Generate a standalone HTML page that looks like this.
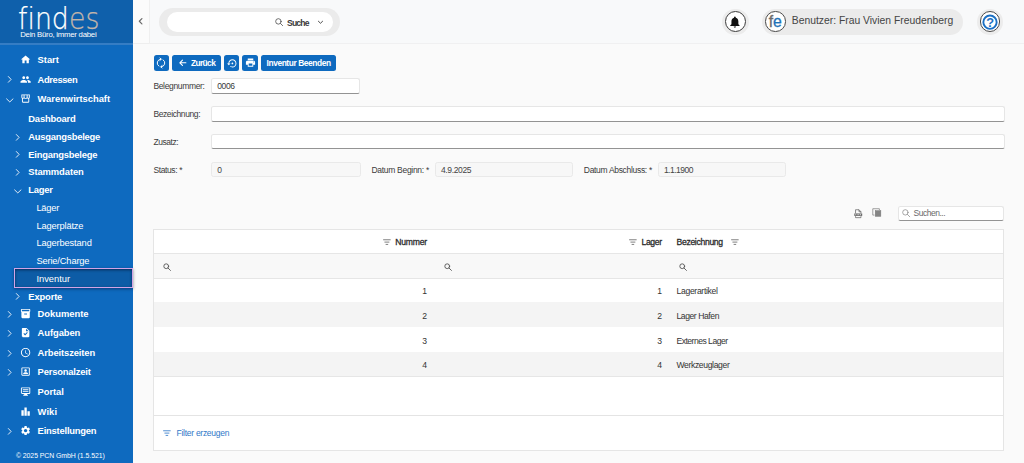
<!DOCTYPE html>
<html lang="de">
<head>
<meta charset="utf-8">
<title>findes – Inventur</title>
<style>
*{box-sizing:border-box;margin:0;padding:0}
html,body{width:1024px;height:463px;overflow:hidden;background:#fafafa;font-family:"Liberation Sans",sans-serif;color:#333}
body{position:relative}
.ic{position:absolute;display:block;overflow:visible}
/* sidebar */
#side{position:absolute;left:0;top:0;width:133px;height:463px;background:#0e6abf;color:#fff}
#logo{position:absolute;left:0;top:0;width:133px;height:45px;background:#0f60ab;border-bottom:2px solid #357dc4}
#logo .w{position:absolute;left:17.800px;top:-0.800px;font-family:"DejaVu Sans Light","DejaVu Sans",sans-serif;font-weight:200;font-size:30.400px;line-height:40px;color:#fff;-webkit-text-stroke:0.250px #fff;transform-origin:0 0;transform:scaleX(.882);white-space:nowrap;font-variant-ligatures:none}
#logo .w span{color:#c2b5aa;-webkit-text-stroke:0.250px #c2b5aa}
#logo .t{position:absolute;left:20.200px;top:30.200px;font-size:7.800px;letter-spacing:-0.260px;line-height:10px;color:#fff;white-space:nowrap}
.mi{position:absolute;left:0;width:133px;height:14px;line-height:14px;font-size:9.400px;letter-spacing:0;font-weight:bold;white-space:nowrap;color:#fff}
.mi.l1{padding-left:37.600px}
.mi.l2{padding-left:28.300px}
.mi.l3{padding-left:36.400px;font-weight:normal;font-size:9.300px}
#foot{position:absolute;left:15.900px;top:451.500px;font-size:6.900px;letter-spacing:-0.050px;line-height:8px;color:#fff;white-space:nowrap}
#sel{position:absolute;left:14px;top:268px;width:119px;height:20px;background:#0d5ca6;border:1px solid #d3a4e6;box-shadow:inset 0 1px 3px rgba(0,0,20,.55),0 1px 3px rgba(0,0,30,.45)}
/* topbar */
#top{position:absolute;left:133px;top:0;width:891px;height:44px;background:#f8f9fa;border-bottom:1px solid #f0f0f1}
#coll{position:absolute;left:0;top:0;width:17px;height:43.500px;background:#fbfbfb;border-right:1px solid #efefef;border-bottom:1px solid #eeeeee}
#spill{position:absolute;left:26.300px;top:8.200px;width:180.500px;height:27.500px;border-radius:14px;background:#ebebeb}
#sin{position:absolute;left:33.500px;top:11.800px;width:166.500px;height:20px;border-radius:10px;background:#fff}
.t{position:absolute;white-space:nowrap;line-height:12px}
.circ{position:absolute;border-radius:50%}
#upill{position:absolute;left:628.700px;top:8.600px;width:201.500px;height:26px;border-radius:13px;background:#ebebeb}
/* toolbar */
.btn{position:absolute;top:55px;height:15.800px;background:#0e6abf;border-radius:2.500px;color:#fff;font-weight:bold;font-size:7.600px;line-height:15.800px;white-space:nowrap}
/* form */
.lbl{position:absolute;font-size:8.500px;line-height:12px;color:#3a3a3a;white-space:nowrap}
.inp{position:absolute;height:15px;background:#fff;border:1px solid #e6e6e6;border-bottom:1px solid #939393;border-radius:2.500px;font-size:8.500px;line-height:14.400px;padding-left:5px;color:#3a3a3a;white-space:nowrap}
.inp.dis{background:#f7f7f7;border:1px solid #e9e9e9;color:#444}
/* grid */
#grid{position:absolute;left:153px;top:229px;width:850.500px;height:222px;background:#fff;border:1px solid #e5e5e5}
.row{position:absolute;left:0;width:848.500px;border-bottom:1px solid #e6e6e6}
.cell{position:absolute;font-size:8.600px;line-height:12px;color:#333;white-space:nowrap}
.hd{color:#2a2a2a;-webkit-text-stroke:0.280px #2a2a2a}
</style>
</head>
<body>
<div id="side">
  <div id="logo"><div class="w">find<span>es</span></div><div class="t">Dein Büro, immer dabei</div></div>
  <div id="sel"></div>
  <div class="mi l1" style="top:53.4px;letter-spacing:-0.032px">Start</div>
  <svg class="ic" style="left:19.7px;top:54.3px;width:11.2px;height:11.2px" viewBox="0 0 24 24" fill="#fff" ><path d="M10 20v-6h4v6h5v-8h3L12 3 2 12h3v8z"/></svg>
  <div class="mi l1" style="top:72.7px;letter-spacing:-0.379px">Adressen</div>
  <svg class="ic" style="left:19.7px;top:73.6px;width:11.2px;height:11.2px" viewBox="0 0 24 24" fill="#fff" ><path d="M16 11c1.66 0 2.99-1.34 2.99-3S17.66 5 16 5c-1.66 0-3 1.34-3 3s1.34 3 3 3zm-8 0c1.66 0 2.99-1.34 2.99-3S9.66 5 8 5C6.34 5 5 6.34 5 8s1.34 3 3 3zm0 2c-2.33 0-7 1.17-7 3.5V19h14v-2.5c0-2.33-4.67-3.5-7-3.5zm8 0c-.29 0-.62.02-.97.05 1.16.84 1.97 1.97 1.97 3.45V19h6v-2.5c0-2.33-4.67-3.5-7-3.5z"/></svg>
  <svg class="ic" style="left:6.8px;top:76.4px;width:6.8px;height:6.8px" viewBox="0 0 10 10" fill="none" stroke="#f1f5fb" stroke-width="1.35" stroke-linecap="round" stroke-linejoin="round"><path d="M2 0.800L6 5 2 9.200"/></svg>
  <div class="mi l1" style="top:91.9px;letter-spacing:-0.006px">Warenwirtschaft</div>
  <svg class="ic" style="left:19.7px;top:92.8px;width:11.2px;height:11.2px" viewBox="0 0 24 24" fill="#fff" ><path fill-rule="evenodd" d="M3 3h18v6.2c0 1.1-.5 2-1.2 2.6V19c0 1.1-.9 2-2 2H6.200c-1.100 0-2-.9-2-2v-7.200C3.500 11.200 3 10.300 3 9.200V3zm2 2v4.100c0 .8.600 1.400 1.350 1.400S7.700 9.900 7.700 9.100V5H5zm4.700 0v4.100c0 .8.600 1.400 1.300 1.400h2c.7 0 1.300-.6 1.300-1.400V5H9.700zm6.600 0v4.100c0 .8.600 1.400 1.350 1.400S19 9.900 19 9.100V5h-2.700zM6.200 12.500V19h11.600v-6.500c-.9 0-1.800-.4-2.400-1.100-.6.700-1.500 1.100-2.400 1.100h-2c-.9 0-1.800-.4-2.400-1.100-.6.700-1.500 1.100-2.400 1.100z"/></svg>
  <svg class="ic" style="left:5.6px;top:96.7px;width:7.6px;height:7.6px" viewBox="0 0 10 10" fill="none" stroke="#f1f5fb" stroke-width="1.2" stroke-linecap="round" stroke-linejoin="round"><path d="M0.800 2.500L5 6.500 9.200 2.500"/></svg>
  <div class="mi l2" style="top:111.9px;letter-spacing:-0.197px">Dashboard</div>
  <div class="mi l2" style="top:129.8px;letter-spacing:-0.238px">Ausgangsbelege</div>
  <svg class="ic" style="left:15.3px;top:133.5px;width:6.8px;height:6.8px" viewBox="0 0 10 10" fill="none" stroke="#f1f5fb" stroke-width="1.35" stroke-linecap="round" stroke-linejoin="round"><path d="M2 0.800L6 5 2 9.200"/></svg>
  <div class="mi l2" style="top:147.7px;letter-spacing:-0.215px">Eingangsbelege</div>
  <svg class="ic" style="left:15.3px;top:151.4px;width:6.8px;height:6.8px" viewBox="0 0 10 10" fill="none" stroke="#f1f5fb" stroke-width="1.35" stroke-linecap="round" stroke-linejoin="round"><path d="M2 0.800L6 5 2 9.200"/></svg>
  <div class="mi l2" style="top:164.9px;letter-spacing:-0.087px">Stammdaten</div>
  <svg class="ic" style="left:15.3px;top:168.6px;width:6.8px;height:6.8px" viewBox="0 0 10 10" fill="none" stroke="#f1f5fb" stroke-width="1.35" stroke-linecap="round" stroke-linejoin="round"><path d="M2 0.800L6 5 2 9.200"/></svg>
  <div class="mi l2" style="top:182.7px;letter-spacing:-0.246px">Lager</div>
  <svg class="ic" style="left:14.1px;top:187.5px;width:7.6px;height:7.6px" viewBox="0 0 10 10" fill="none" stroke="#f1f5fb" stroke-width="1.2" stroke-linecap="round" stroke-linejoin="round"><path d="M0.800 2.500L5 6.500 9.200 2.500"/></svg>
  <div class="mi l3" style="top:201.0px;letter-spacing:-0.236px">Läger</div>
  <div class="mi l3" style="top:218.8px;letter-spacing:-0.145px">Lagerplätze</div>
  <div class="mi l3" style="top:235.9px;letter-spacing:-0.131px">Lagerbestand</div>
  <div class="mi l3" style="top:253.7px;letter-spacing:-0.148px">Serie/Charge</div>
  <div class="mi l3" style="top:272.1px;letter-spacing:0.026px">Inventur</div>
  <div class="mi l2" style="top:289.6px;letter-spacing:-0.144px">Exporte</div>
  <svg class="ic" style="left:15.3px;top:293.3px;width:6.8px;height:6.8px" viewBox="0 0 10 10" fill="none" stroke="#f1f5fb" stroke-width="1.35" stroke-linecap="round" stroke-linejoin="round"><path d="M2 0.800L6 5 2 9.200"/></svg>
  <div class="mi l1" style="top:306.9px;letter-spacing:-0.007px">Dokumente</div>
  <svg class="ic" style="left:19.7px;top:307.8px;width:11.2px;height:11.2px" viewBox="0 0 24 24" fill="#fff" ><path d="M20 2H4c-1 0-2 .9-2 2v3.010c0 .72.430 1.340 1 1.690V20c0 1.100 1.100 2 2 2h14c.9 0 2-.9 2-2V8.700c.57-.35 1-.97 1-1.690V4c0-1.100-1-2-2-2zm-5 12H9v-2h6v2zm5-7H4V4h16v3z"/></svg>
  <svg class="ic" style="left:6.8px;top:310.6px;width:6.8px;height:6.8px" viewBox="0 0 10 10" fill="none" stroke="#f1f5fb" stroke-width="1.35" stroke-linecap="round" stroke-linejoin="round"><path d="M2 0.800L6 5 2 9.200"/></svg>
  <div class="mi l1" style="top:326.2px;letter-spacing:-0.067px">Aufgaben</div>
  <svg class="ic" style="left:19.7px;top:327.1px;width:11.2px;height:11.2px" viewBox="0 0 24 24" fill="#fff" ><path d="M14 2H6c-1.100 0-1.990.9-1.990 2L4 20c0 1.100.890 2 1.990 2H18c1.100 0 2-.9 2-2V8l-6-6zm-3.060 16L7.400 14.460l1.410-1.410 2.120 2.120 4.240-4.240 1.410 1.410L10.940 18zM13 9V3.500L18.500 9H13z"/></svg>
  <svg class="ic" style="left:6.8px;top:329.9px;width:6.8px;height:6.8px" viewBox="0 0 10 10" fill="none" stroke="#f1f5fb" stroke-width="1.35" stroke-linecap="round" stroke-linejoin="round"><path d="M2 0.800L6 5 2 9.200"/></svg>
  <div class="mi l1" style="top:345.9px;letter-spacing:-0.106px">Arbeitszeiten</div>
  <svg class="ic" style="left:19.7px;top:346.8px;width:11.2px;height:11.2px" viewBox="0 0 24 24" fill="#fff" ><path d="M11.990 2C6.470 2 2 6.480 2 12s4.470 10 9.990 10C17.520 22 22 17.520 22 12S17.520 2 11.990 2zM12 20c-4.420 0-8-3.580-8-8s3.580-8 8-8 8 3.580 8 8-3.580 8-8 8zm.5-13H11v6l5.250 3.150.750-1.230-4.500-2.670z"/></svg>
  <svg class="ic" style="left:6.8px;top:349.6px;width:6.8px;height:6.8px" viewBox="0 0 10 10" fill="none" stroke="#f1f5fb" stroke-width="1.35" stroke-linecap="round" stroke-linejoin="round"><path d="M2 0.800L6 5 2 9.200"/></svg>
  <div class="mi l1" style="top:365.4px;letter-spacing:-0.186px">Personalzeit</div>
  <svg class="ic" style="left:19.7px;top:366.3px;width:11.2px;height:11.2px" viewBox="0 0 24 24" fill="#fff" ><path fill-rule="evenodd" d="M5 3h14c1.100 0 2 .9 2 2v14c0 1.100-.9 2-2 2H5c-1.100 0-2-.9-2-2V5c0-1.100.9-2 2-2zm0 2v14h14V5H5zm7 2.200c1.500 0 2.700 1.200 2.700 2.700S13.500 12.600 12 12.600 9.300 11.400 9.300 9.900 10.500 7.200 12 7.200zM6.800 17v-.9c0-1.800 3.500-2.700 5.200-2.700s5.200.9 5.200 2.700v.9H6.800z"/></svg>
  <svg class="ic" style="left:6.8px;top:369.1px;width:6.8px;height:6.8px" viewBox="0 0 10 10" fill="none" stroke="#f1f5fb" stroke-width="1.35" stroke-linecap="round" stroke-linejoin="round"><path d="M2 0.800L6 5 2 9.200"/></svg>
  <div class="mi l1" style="top:384.9px;letter-spacing:-0.08px">Portal</div>
  <svg class="ic" style="left:19.7px;top:385.8px;width:11.2px;height:11.2px" viewBox="0 0 24 24" fill="#fff" ><path fill-rule="evenodd" d="M4 3h16c1.100 0 2 .9 2 2v10c0 1.100-.9 2-2 2h-5v2h2v2H7v-2h2v-2H4c-1.100 0-2-.9-2-2V5c0-1.100.9-2 2-2zm0 2v10h16V5H4zm2 2h12v2H6V7zm0 4h12v2H6v-2z"/></svg>
  <div class="mi l1" style="top:404.7px;letter-spacing:0.074px">Wiki</div>
  <svg class="ic" style="left:19.7px;top:405.6px;width:11.2px;height:11.2px" viewBox="0 0 24 24" fill="#fff" ><path d="M8 21H3V9h5v12zm6.500-18h-5v18h5V3zM21 11h-5v10h5V11z"/></svg>
  <div class="mi l1" style="top:424.4px;letter-spacing:-0.205px">Einstellungen</div>
  <svg class="ic" style="left:19.7px;top:425.3px;width:11.2px;height:11.2px" viewBox="0 0 24 24" fill="#fff" ><path d="M19.140 12.940c.04-.3.060-.610.060-.940 0-.320-.02-.640-.07-.940l2.030-1.580c.18-.14.230-.410.120-.610l-1.920-3.320c-.12-.22-.37-.29-.59-.22l-2.390.960c-.5-.38-1.030-.7-1.620-.940l-.36-2.540c-.04-.24-.24-.41-.48-.41h-3.840c-.24 0-.43.170-.47.410l-.36 2.540c-.59.240-1.130.570-1.620.940l-2.390-.96c-.22-.08-.47 0-.59.220L2.740 8.870c-.12.210-.08.470.12.610l2.030 1.580c-.05.3-.09.630-.09.940s.02.640.07.940l-2.030 1.580c-.18.140-.23.410-.12.610l1.920 3.320c.12.220.37.290.59.220l2.390-.96c.5.380 1.030.7 1.620.940l.36 2.540c.05.240.24.410.48.410h3.840c.24 0 .44-.17.470-.41l.36-2.540c.59-.24 1.130-.56 1.620-.94l2.390.960c.22.080.47 0 .59-.22l1.920-3.320c.12-.22.070-.47-.12-.61l-2.010-1.580zM12 15.600c-1.980 0-3.600-1.620-3.600-3.600s1.620-3.600 3.600-3.600 3.600 1.620 3.600 3.600-1.620 3.600-3.600 3.600z"/></svg>
  <svg class="ic" style="left:6.8px;top:428.1px;width:6.8px;height:6.8px" viewBox="0 0 10 10" fill="none" stroke="#f1f5fb" stroke-width="1.35" stroke-linecap="round" stroke-linejoin="round"><path d="M2 0.800L6 5 2 9.200"/></svg>
  <div id="foot">© 2025 PCN GmbH (1.5.521)</div>
</div>
<div id="top">
<div id="coll"></div>
<svg class="ic" style="left:5.2px;top:18.3px;width:6.5px;height:6.5px" viewBox="0 0 10 10" fill="none" stroke="#6a6a6a" stroke-width="1.75" stroke-linecap="round" stroke-linejoin="round"><path d="M6 0.800L2 5 6 9.200"/></svg>
<div id="spill"></div><div id="sin"></div>
<svg class="ic" style="left:142px;top:18.100px;width:8.400px;height:8.400px" viewBox="0 0 16 16" fill="none" stroke="#4a4a4a" stroke-width="1.500" stroke-linecap="round"><circle cx="6.500" cy="6.500" r="5.200"/><path d="M10.500 10.500L14.600 14.600"/></svg>
<div class="t" style="left:154px;top:16.900px;font-size:8.600px;letter-spacing:-0.819px;font-weight:bold;color:#3a3a3a">Suche</div>
<svg class="ic" style="left:185.4px;top:20.3px;width:5px;height:5px" viewBox="0 0 10 10" fill="none" stroke="#444" stroke-width="1.9" stroke-linecap="round" stroke-linejoin="round"><path d="M0.800 2.500L5 6.500 9.200 2.500"/></svg>
<div class="circ" style="left:589.200px;top:8.500px;width:26.400px;height:26.400px;background:#ececec"></div>
<div class="circ" style="left:592px;top:11.100px;width:20.900px;height:20.900px;background:#fff;border:1px solid #3c3c3c"></div>
<svg class="ic" style="left:595.400px;top:15.200px;width:13.800px;height:13.800px" viewBox="0 0 24 24" fill="#111"><path d="M12 22c1.100 0 2-.9 2-2h-4c0 1.100.9 2 2 2zm6-6v-5c0-3.070-1.630-5.640-4.500-6.320V4c0-.83-.67-1.500-1.500-1.500s-1.500.67-1.500 1.500v.680C7.640 5.360 6 7.920 6 11v5l-2 2v1h16v-1l-2-2z"/></svg>
<div id="upill"></div>
<div class="circ" style="left:632px;top:11.300px;width:20.500px;height:20.500px;background:#fff;border:1px solid #4a4a4a"></div>
<div class="t" style="left:635.800px;top:12.900px;font-size:15.800px;line-height:17px;letter-spacing:-0.300px;color:#6b6b6b;-webkit-text-stroke:0.300px #6b6b6b">f<span style="color:#1e73b8;-webkit-text-stroke:0.300px #1e73b8">e</span></div>
<div class="t" style="left:658.800px;top:14.500px;font-size:10.350px;line-height:12px;color:#444">Benutzer: Frau Vivien Freudenberg</div>
<div class="circ" style="left:843.900px;top:8.500px;width:26.400px;height:26.400px;background:#ececec"></div>
<div class="circ" style="left:846.800px;top:11.300px;width:20.500px;height:20.500px;background:#fff;border:1px solid #4a4a4a"></div>
<svg class="ic" style="left:849.100px;top:13.650px;width:16px;height:16px" viewBox="0 0 16 16" fill="none" stroke="#1b70c4" stroke-width="1.900"><circle cx="8" cy="8.200" r="6.650"/></svg>
<div class="t" style="left:853.200px;top:15.900px;font-size:12.800px;line-height:14px;font-weight:bold;color:#1b70c4">?</div>
</div>
<div class="btn" style="left:153.8px;width:15.6px"><svg class="ic" style="left:1.550px;top:2.200px;width:12px;height:12px" viewBox="0 0 20 20" fill="none" stroke="#fff" stroke-width="1.600" stroke-linecap="round" stroke-linejoin="round"><path d="M10 3.700A6.300 6.300 0 0 0 6.390 15.160M10 16.300A6.300 6.300 0 0 0 13.610 4.840"/><path d="M8.300 1.700L10.300 3.700 8.300 5.700M11.700 14.300L9.700 16.300 11.700 18.300"/></svg></div>
<div class="btn" style="left:172.2px;width:48.6px"><svg class="ic" style="left:6.700px;top:4.300px;width:7.600px;height:7.600px" viewBox="0 0 16 16" fill="none" stroke="#fff" stroke-width="2.400" stroke-linecap="round" stroke-linejoin="round"><path d="M14.500 8H2M7.300 2.500L1.800 8l5.500 5.500"/></svg><span style="position:absolute;left:18.800px;top:1.100px;font-size:8.400px;letter-spacing:-0.623px">Zurück</span></div>
<div class="btn" style="left:223.6px;width:15.7px"><svg class="ic" style="left:3px;top:2.500px;width:10.800px;height:10.800px" viewBox="0 0 24 24" fill="#fff"><path d="M14 12c0-1.100-.9-2-2-2s-2 .9-2 2 .9 2 2 2 2-.9 2-2zm-2-9c-4.970 0-9 4.030-9 9H0l4 4 4-4H5c0-3.870 3.130-7 7-7s7 3.130 7 7-3.130 7-7 7c-1.510 0-2.910-.49-4.060-1.300l-1.420 1.440C8.040 20.300 9.940 21 12 21c4.970 0 9-4.030 9-9s-4.030-9-9-9z"/></svg></div>
<div class="btn" style="left:242.1px;width:16px"><svg class="ic" style="left:2.600px;top:2.400px;width:11px;height:11px" viewBox="0 0 24 24" fill="#fff"><path d="M19 8H5c-1.660 0-3 1.340-3 3v6h4v4h12v-4h4v-6c0-1.660-1.340-3-3-3zm-3 11H8v-5h8v5zm3-7c-.55 0-1-.45-1-1s.45-1 1-1 1 .45 1 1-.45 1-1 1zm-1-9H6v4h12V3z"/></svg></div>
<div class="btn" style="left:261px;width:74.8px"><span style="position:absolute;left:5.500px;top:1.100px;font-size:8.400px;letter-spacing:-0.408px">Inventur Beenden</span></div>
<div class="lbl" style="left:153.4px;top:80.2px;letter-spacing:-0.34px">Belegnummer:</div>
<div class="inp" style="left:211.4px;top:78px;width:148.8px;height:16px;padding-left:4.9px;letter-spacing:-0.405px">0006</div>
<div class="lbl" style="left:153.4px;top:108.2px;letter-spacing:-0.401px">Bezeichnung:</div>
<div class="inp" style="left:211.4px;top:106px;width:793.2px;height:16px;padding-left:4.9px"></div>
<div class="lbl" style="left:153.4px;top:135.8px;letter-spacing:-0.439px">Zusatz:</div>
<div class="inp" style="left:211.4px;top:134px;width:793.2px;height:15px;padding-left:4.9px"></div>
<div class="lbl" style="left:153.4px;top:164.0px;letter-spacing:-0.382px">Status: *</div>
<div class="inp dis" style="left:211.4px;top:162px;width:149.3px;height:15px;padding-left:4.9px">0</div>
<div class="lbl" style="left:371.4px;top:164.0px;letter-spacing:-0.287px">Datum Beginn: *</div>
<div class="inp dis" style="left:435px;top:162px;width:138px;height:15px;padding-left:4.9px;letter-spacing:-0.349px">4.9.2025</div>
<div class="lbl" style="left:583.8px;top:164.0px;letter-spacing:-0.306px">Datum Abschluss: *</div>
<div class="inp dis" style="left:658px;top:162px;width:127.7px;height:15px;padding-left:4.9px;letter-spacing:-0.512px">1.1.1900</div>
<svg class="ic" style="left:853.800px;top:208.900px;width:8.500px;height:9.400px" viewBox="0 0 17 19" fill="none" stroke="#5a5a5a" stroke-width="1.400" stroke-linejoin="round"><path d="M3 8.500V1.500h7L14 5.500v3M10 1.500V5.500h4M3 14.500v3h11v-3"/><rect x="0.500" y="9" width="16" height="5" fill="#6a6a6a" stroke="none"/><path d="M2.500 11.500h1.600M5.500 11.500h1.600M8.500 11.500h1.600M11.500 11.500h2.500" stroke="#fff" stroke-width="1.600"/></svg>
<svg class="ic" style="left:872px;top:208.400px;width:9.400px;height:8.800px" viewBox="0 0 19 18" fill="none" stroke="#6a6a6a" stroke-width="1.300"><path d="M5 14.500H1.500V1.500h13.500v3"/><rect x="6.500" y="5.500" width="11.500" height="11.500" fill="#858585" stroke="#777" stroke-width="1"/></svg>
<div class="inp" style="left:897.8px;top:206px;width:105.8px;height:15px;padding-left:4.9px"></div>
<svg class="ic" style="left:901.600px;top:208.800px;width:8.300px;height:8.300px" viewBox="0 0 16 16" fill="none" stroke="#7a7a7a" stroke-width="1.250" stroke-linecap="round"><circle cx="6.500" cy="6.500" r="5.200"/><path d="M10.400 10.400L15 15"/></svg>
<div class="t" style="left:913.600px;top:207.400px;font-size:8.500px;letter-spacing:-0.502px;color:#6a6a6a">Suchen...</div>
<div id="grid"><div class="row" style="top:0;height:24px;background:#fff"></div>
<div class="row" style="top:24px;height:25px;background:#f8f8f8"></div>
<div class="row" style="top:49px;height:23px;background:#fff;border-bottom:none;"></div>
<div class="row" style="top:72px;height:25px;background:#f4f4f4;border-bottom:none;"></div>
<div class="row" style="top:97px;height:25px;background:#fff;border-bottom:none;"></div>
<div class="row" style="top:122px;height:25px;background:#f4f4f4;"></div>
<svg class="ic" style="left:229.2px;top:9.4px;width:7.800px;height:6.200px" viewBox="0 0 15 12" fill="none" stroke="#6e6e6e" stroke-width="1.700" stroke-linecap="round"><path d="M1 1.500h13M3.500 6h8M5.800 10.500h3.400"/></svg>
<div class="cell hd" style="right:575.49px;top:5.9px;letter-spacing:-0.192px">Nummer</div>
<svg class="ic" style="left:475.2px;top:9.4px;width:7.800px;height:6.200px" viewBox="0 0 15 12" fill="none" stroke="#6e6e6e" stroke-width="1.700" stroke-linecap="round"><path d="M1 1.500h13M3.500 6h8M5.800 10.500h3.400"/></svg>
<div class="cell hd" style="right:340.88px;top:5.9px;letter-spacing:-0.377px">Lager</div>
<div class="cell hd" style="left:522.5px;top:5.9px;letter-spacing:-0.309px">Bezeichnung</div>
<svg class="ic" style="left:576.6px;top:9.4px;width:7.800px;height:6.200px" viewBox="0 0 15 12" fill="none" stroke="#6e6e6e" stroke-width="1.700" stroke-linecap="round"><path d="M1 1.500h13M3.500 6h8M5.800 10.500h3.400"/></svg>
<svg class="ic" style="left:9.4px;top:32.9px;width:8.200px;height:8.200px" viewBox="0 0 16 16" fill="none" stroke="#505050" stroke-width="1.700" stroke-linecap="round"><circle cx="6.300" cy="6.300" r="4.700"/><path d="M9.800 9.800L14.600 14.600"/></svg>
<svg class="ic" style="left:290.0px;top:32.9px;width:8.200px;height:8.200px" viewBox="0 0 16 16" fill="none" stroke="#505050" stroke-width="1.700" stroke-linecap="round"><circle cx="6.300" cy="6.300" r="4.700"/><path d="M9.800 9.800L14.600 14.600"/></svg>
<svg class="ic" style="left:524.6px;top:32.9px;width:8.200px;height:8.200px" viewBox="0 0 16 16" fill="none" stroke="#505050" stroke-width="1.700" stroke-linecap="round"><circle cx="6.300" cy="6.300" r="4.700"/><path d="M9.800 9.800L14.600 14.600"/></svg>
<div class="cell " style="right:575.5px;top:55.2px;letter-spacing:0px">1</div>
<div class="cell " style="right:340.5px;top:55.2px;letter-spacing:0px">1</div>
<div class="cell " style="left:522.5px;top:55.2px;letter-spacing:-0.317px">Lagerartikel</div>
<div class="cell " style="right:575.5px;top:79.6px;letter-spacing:0px">2</div>
<div class="cell " style="right:340.5px;top:79.6px;letter-spacing:0px">2</div>
<div class="cell " style="left:522.5px;top:79.6px;letter-spacing:-0.438px">Lager Hafen</div>
<div class="cell " style="right:575.5px;top:104.5px;letter-spacing:0px">3</div>
<div class="cell " style="right:340.5px;top:104.5px;letter-spacing:0px">3</div>
<div class="cell " style="left:522.5px;top:104.5px;letter-spacing:-0.52px">Externes Lager</div>
<div class="cell " style="right:575.5px;top:128.7px;letter-spacing:0px">4</div>
<div class="cell " style="right:340.5px;top:128.7px;letter-spacing:0px">4</div>
<div class="cell " style="left:522.5px;top:128.7px;letter-spacing:-0.365px">Werkzeuglager</div>
<div style="position:absolute;left:0;top:185.300px;width:848.500px;height:1px;background:#e4e4e4"></div>
<svg class="ic" style="left:8.6px;top:200.4px;width:7.800px;height:6.200px" viewBox="0 0 15 12" fill="none" stroke="#3a7fcb" stroke-width="1.700" stroke-linecap="round"><path d="M1 1.500h13M3.500 6h8M5.800 10.500h3.400"/></svg>
<div class="cell" style="left:22.6px;top:197.400px;color:#2f78c8;font-size:8.500px;letter-spacing:-0.28px">Filter erzeugen</div></div>
</body>
</html>
